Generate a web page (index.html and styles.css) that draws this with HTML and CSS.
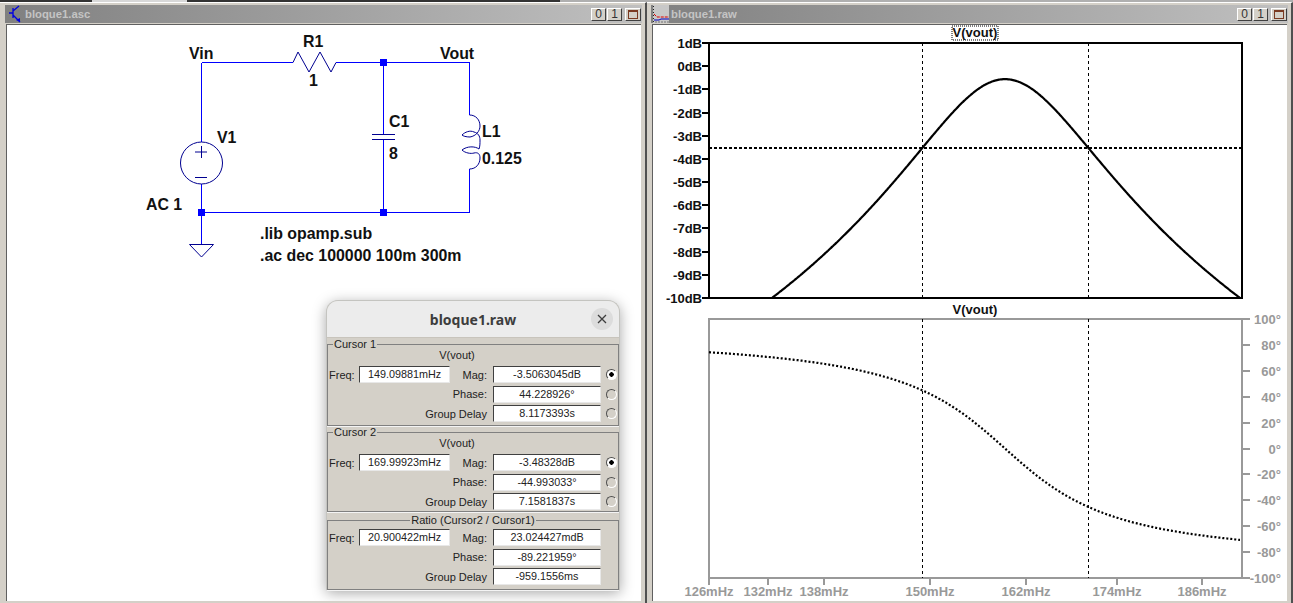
FILE: index.html
```html
<!DOCTYPE html>
<html lang="en">
<head>
  <meta charset="UTF-8" />
  <title>bloque1</title>
  <link rel="stylesheet" href="styles.css">
</head>
<body>
  <div class="topstrip"></div>
  <div class="desktop">
    <div class="window schematic">
      <div class="titlebar">
        <svg class="appicon" width="14" height="18" viewBox="0 0 14 18">
          <path d="M1 8H5M5 3V13M5 6L11 1M5 10L12 17" stroke="#0000e0" stroke-width="1.3" fill="none"/>
          <path d="M8 15L12 13L12 17Z" fill="#0000e0"/>
        </svg>
        <span class="wintitle">bloque1.asc</span>
        <div class="winbtns"><span class="winbtn">0</span><span class="winbtn">1</span><span class="winbtn maxbtn"><i class="maxbox"></i></span></div>
      </div>
      <div class="client">
        <svg class="canvas" width="634" height="576" viewBox="7 25 634 576">
          <g class="wire">
            <path d="M201.5 62.5H293M336 62.5H469.5V115M469.5 169V212.5H201.5M201.5 62.5V142M201.5 184V245"/>
            <path d="M383.5 62.5V134M383.5 140V212.5"/>
          </g>
          <g class="sym">
            <path d="M293 62.5L298 52L309 72L320 52L331 72L336 62.5"/>
            <circle cx="201.5" cy="163" r="21"/>
            <path d="M195 152H207M201.5 146V158M195 177.5H207"/>
            <path d="M189.5 244.5H213.5L201.5 257Z"/>
            <path d="M372 134.5H395M372 139.5H395" class="cap"/>
            <path d="M469.5 115C476 115 480 120 480 126C480 131 476 136 470 137C466 137 463 136 462 135C465 132 470 130 474 132C478 133 480 136 480 140C480 144 480 146 479 149C475 146 467 146 462 150C465 153 471 154 474 153C478 152 480 154 480 158C480 164 476 169 469.5 169"/>
          </g>
          <g class="junctions">
            <rect x="198" y="209" width="7" height="7"/>
            <rect x="380" y="59" width="7" height="7"/>
            <rect x="380" y="209" width="7" height="7"/>
          </g>
          <g class="labels">
            <text x="189" y="59">Vin</text>
            <text x="303" y="47">R1</text>
            <text x="309" y="86">1</text>
            <text x="440" y="59">Vout</text>
            <text x="217" y="143">V1</text>
            <text x="146" y="210">AC 1</text>
            <text x="389" y="127">C1</text>
            <text x="389" y="159">8</text>
            <text x="482" y="137">L1</text>
            <text x="482" y="164">0.125</text>
            <text x="260" y="239">.lib opamp.sub</text>
            <text x="260" y="261">.ac dec 100000 100m 300m</text>
          </g>
        </svg>

        <div class="dialog">
          <div class="dlghead">
            <span class="dlgtitle">bloque1.raw</span>
            <span class="dlgclose">
              <svg width="10" height="10" viewBox="0 0 10 10"><path d="M1 1L9 9M9 1L1 9" stroke="#3d3d3d" stroke-width="1.3"/></svg>
            </span>
          </div>
          <div class="dlgbody">
            <fieldset class="group">
              <legend>Cursor 1</legend>
              <div class="trace">V(vout)</div>
              <div class="row"><label class="flabel">Freq:</label><span class="field">149.09881mHz</span><label class="rlabel">Mag:</label><span class="field">-3.5063045dB</span><i class="radio on"></i></div>
              <div class="row"><label class="rlabel wide">Phase:</label><span class="field">44.228926°</span><i class="radio"></i></div>
              <div class="row"><label class="rlabel wide">Group Delay</label><span class="field">8.1173393s</span><i class="radio"></i></div>
            </fieldset>
            <fieldset class="group second">
              <legend>Cursor 2</legend>
              <div class="trace">V(vout)</div>
              <div class="row"><label class="flabel">Freq:</label><span class="field">169.99923mHz</span><label class="rlabel">Mag:</label><span class="field">-3.48328dB</span><i class="radio on"></i></div>
              <div class="row"><label class="rlabel wide">Phase:</label><span class="field">-44.993033°</span><i class="radio"></i></div>
              <div class="row"><label class="rlabel wide">Group Delay</label><span class="field">7.1581837s</span><i class="radio"></i></div>
            </fieldset>
            <fieldset class="group ratio">
              <legend>Ratio (Cursor2 / Cursor1)</legend>
              <div class="row"><label class="flabel">Freq:</label><span class="field">20.900422mHz</span><label class="rlabel">Mag:</label><span class="field">23.024427mdB</span></div>
              <div class="row"><label class="rlabel wide">Phase:</label><span class="field">-89.221959°</span></div>
              <div class="row"><label class="rlabel wide">Group Delay</label><span class="field">-959.1556ms</span></div>
            </fieldset>
          </div>
        </div>
      </div>
    </div>

    <div class="window plot">
      <div class="titlebar">
        <svg class="appicon" width="16" height="18" viewBox="0 0 16 18">
          <rect width="16" height="18" fill="#c8c8c8"/>
          <path d="M0.5 1V17H16" stroke="#222" fill="none" stroke-dasharray="1 2"/>
          <path d="M1 9L4 12H16" stroke="#e00000" fill="none" stroke-dasharray="3 1"/>
          <path d="M1 15H6L8 14H16" stroke="#0000c0" fill="none"/>
        </svg>
        <span class="wintitle">bloque1.raw</span>
        <div class="winbtns"><span class="winbtn">0</span><span class="winbtn">1</span><span class="winbtn maxbtn"><i class="maxbox"></i></span></div>
      </div>
      <div class="client">
        <svg id="plot" class="canvas" width="634" height="576" viewBox="653 25 634 576"></svg>
      </div>
    </div>
  </div>
  <script src="plot.js"></script>
</body>
</html>
```

FILE: styles.css
```css
html, body {
  margin: 0;
  height: 100%;
  overflow: hidden;
}

body {
  font-family: "Liberation Sans", Arial, sans-serif;
  background: #d4d0c8;
}

.topstrip {
  height: 2px;
  background: linear-gradient(to right, #333 92px, #d8d8d8 92px, #d8d8d8 187px, #333 187px, #333 560px, #b0b0b0 560px);
}

.desktop {
  display: flex;
  height: 601px;
}

.window {
  box-sizing: border-box;
  display: flex;
  flex-direction: column;
  background: #d4d0c8;
  border-top: 1px solid #fff;
  border-right: 2px solid #505050;
  padding: 2px 3px 2px 4px;
}

.schematic {
  width: 647px;
  padding-left: 5px;
}

.plot {
  width: 646px;
}

.titlebar {
  flex: none;
  display: flex;
  align-items: center;
  height: 18px;
  background: linear-gradient(to right, #808080, #c0c0c0);
  padding-left: 3px;
}

.plot .titlebar {
  padding-left: 2px;
}

.appicon {
  flex: none;
  margin-right: 3px;
}

.plot .appicon {
  margin-right: 2px;
}

.wintitle {
  flex: 1;
  font-size: 11.3px;
  font-weight: bold;
  color: #c4c4c4;
}

.winbtns {
  display: flex;
  gap: 1px;
  margin-right: 1px;
}

.winbtn {
  box-sizing: border-box;
  width: 15px;
  height: 13px;
  display: flex;
  align-items: center;
  justify-content: center;
  font-size: 12px;
  color: #333;
  background: #d4d0c8;
  border: 1px solid;
  border-color: #fff #404040 #404040 #fff;
}

.maxbtn {
  width: 16px;
  margin-left: 2px;
}

.maxbox {
  box-sizing: border-box;
  width: 10px;
  height: 9px;
  border: 1px solid #7a3a22;
  border-top-width: 2px;
}

.client {
  flex: 1;
  position: relative;
  margin: 1px 1px 0;
  background: #fff;
  border-top: 1px solid #606060;
  border-left: 1px solid #606060;
  overflow: hidden;
}

.canvas {
  display: block;
}

.wire path {
  fill: none;
  stroke: #0000ff;
  stroke-width: 1;
  shape-rendering: crispEdges;
}

.sym path, .sym circle {
  fill: none;
  stroke: #000090;
  stroke-width: 1;
}

.sym .cap {
  shape-rendering: crispEdges;
}

.junctions rect {
  fill: #0000ff;
}

.labels text {
  font-size: 15.9px;
  font-weight: bold;
  fill: #111;
}

/* cursor readout, gtk headerbar over a win32 body */
.dialog {
  position: absolute;
  left: 319px;
  top: 275px;
  box-sizing: border-box;
  width: 294px;
  border-radius: 12px 12px 0 0;
  background: #d4d0c8;
  box-shadow: 0 3px 14px rgba(0,0,0,0.35);
  border: 1px solid #c4c4c0;
  border-bottom: 0;
}

.dlghead {
  position: relative;
  height: 36px;
  display: flex;
  align-items: center;
  justify-content: center;
  background: #ececec;
  border-radius: 11px 11px 0 0;
  border-bottom: 1px solid #c8c4bc;
}

.dlgtitle {
  font-family: "Noto Sans", sans-serif;
  font-size: 14px;
  font-weight: bold;
  color: #3d3d3d;
}

.dlgclose {
  position: absolute;
  right: 6px;
  top: 7px;
  width: 22px;
  height: 22px;
  border-radius: 50%;
  background: #dcdcdc;
  display: flex;
  align-items: center;
  justify-content: center;
}

.dlgbody {
  padding-top: 0;
}

.group {
  box-sizing: border-box;
  margin: 0;
  padding: 0;
  min-width: 0;
  height: 88px;
  border: 1px solid #808080;
  box-shadow: 0 1px 0 #f4f4f4;
  font-size: 11px;
  color: #222;
}

.group legend {
  padding: 0 1px;
  margin-left: 5px;
  line-height: 12px;
}

.second {
  height: 86px;
}

.ratio {
  height: 76px;
  margin-top: 2px;
  padding-top: 2px;
}

.ratio legend {
  margin: 0 auto;
}

.trace {
  height: 15px;
  line-height: 11px;
  text-align: center;
  padding-right: 32px;
}

.row {
  display: grid;
  grid-template-columns: 31px 91px 43px 108px 17px;
  align-items: center;
  height: 19.5px;
}

.flabel {
  padding-left: 1px;
}

.rlabel {
  text-align: right;
  padding-right: 6px;
}

.rlabel.wide {
  grid-column: 1 / 4;
}

.field {
  box-sizing: border-box;
  height: 17px;
  line-height: 15px;
  text-align: center;
  font-size: 10.8px;
  background: #fff;
  border: 1px solid;
  border-color: #404040 #e8e8e8 #e8e8e8 #404040;
}

.radio {
  box-sizing: border-box;
  width: 11px;
  height: 11px;
  margin-left: 5px;
  border-radius: 50%;
  background: #d4d0c8;
  border: 1px solid;
  border-color: #505050 #fff #fff #505050;
}

.radio.on {
  background: radial-gradient(circle, #000 0 2px, #fff 2.5px);
}

/* plot svg */
.pane-a { fill: none; stroke: #000; stroke-width: 2; shape-rendering: crispEdges; }
.pane-b { fill: none; stroke: #999; stroke-width: 2; shape-rendering: crispEdges; }
.tick-a { stroke: #000; stroke-width: 2; shape-rendering: crispEdges; }
.tick-b { stroke: #999; stroke-width: 2; shape-rendering: crispEdges; }
.cursor { stroke: #000; stroke-width: 1; stroke-dasharray: 3 3; shape-rendering: crispEdges; }
.cursor-h { stroke: #000; stroke-width: 1.5; stroke-dasharray: 3 2; shape-rendering: crispEdges; }
.mag { fill: none; stroke: #000; stroke-width: 2.2; }
.phase { fill: none; stroke: #000; stroke-width: 2.2; stroke-dasharray: 2 2; }
.lbl-a { font-size: 13px; font-weight: bold; fill: #111; }
.lbl-b { font-size: 13px; font-weight: bold; fill: #999; }
.trace-name { font-size: 13px; font-weight: bold; fill: #111; }
.trace-box { fill: #fff; stroke: #000; stroke-width: 1; stroke-dasharray: 1 1; }
```

FILE: plot.js
```js
// draws both panes of the waveform viewer
const svg = document.getElementById('plot');
const NS = 'http://www.w3.org/2000/svg';

function add(tag, attrs, text) {
  const el = document.createElementNS(NS, tag);
  for (const k in attrs) el.setAttribute(k, attrs[k]);
  if (text) el.textContent = text;
  svg.appendChild(el);
}

const left = 709, right = 1242;
const topA = 43, botA = 298, topB = 319, botB = 578;
const cursorX = [922, 1088];
const freqTicks = { 126: 709, 132: 768, 138: 824, 150: 930, 162: 1026, 174: 1117, 186: 1202 };

// resonance centre and half width in screen pixels
const x0 = 1005, wPh = 83;

const yMag = db => topA + (1 - db) * (botA - topA) / 11;
const yPh = p => topB + (100 - p) * (botB - topB) / 200;

const magPts = [], phPts = [];
for (let x = left; x <= right - 2; x += 1) {
  const wMag = x < x0 ? 83.5 : 84.2;
  const db = -0.56 - 10 * Math.log10(1 + Math.pow((x - x0) / wMag, 2));
  if (db >= -10) magPts.push(x + ',' + yMag(db).toFixed(1));
  const ph = -Math.atan((x - x0) / wPh) * 180 / Math.PI;
  phPts.push(x + ',' + yPh(ph).toFixed(1));
}

add('rect', { class: 'pane-a', x: left, y: topA, width: right - left, height: botA - topA });
add('path', { class: 'pane-b', d: `M${left} ${topB}H${right}V${botB}H${left}Z` });

// magnitude axis
for (let i = 0; i <= 11; i++) {
  const y = Math.round(topA + i * (botA - topA) / 11);
  add('line', { class: 'tick-a', x1: left - 7, x2: left, y1: y, y2: y });
  add('text', { class: 'lbl-a', x: left - 7, y: y + 5, 'text-anchor': 'end' }, (1 - i) + 'dB');
}

// phase axis
for (let i = 0; i <= 10; i++) {
  const y = Math.round(topB + i * (botB - topB) / 10);
  add('line', { class: 'tick-b', x1: right, x2: right + 8, y1: y, y2: y });
  add('text', { class: 'lbl-b', x: 1281, y: y + 5, 'text-anchor': 'end' }, (100 - i * 20) + '°');
}

// frequency axis
for (const f in freqTicks) {
  const x = freqTicks[f];
  add('line', { class: 'tick-b', x1: x, x2: x, y1: botB, y2: botB + 7 });
  add('text', { class: 'lbl-b', x: x, y: 596, 'text-anchor': 'middle' }, f + 'mHz');
}

// cursors
cursorX.forEach(x => {
  add('line', { class: 'cursor', x1: x + 0.5, x2: x + 0.5, y1: topA, y2: botA });
  add('line', { class: 'cursor', x1: x + 0.5, x2: x + 0.5, y1: topB, y2: botB });
});
add('line', { class: 'cursor-h', x1: left, x2: right, y1: 148, y2: 148 });

add('polyline', { class: 'mag', points: magPts.join(' ') });
add('polyline', { class: 'phase', points: phPts.join(' ') });

add('rect', { class: 'trace-box', x: 952, y: 26, width: 46, height: 14 });
add('text', { class: 'trace-name', x: 975, y: 37, 'text-anchor': 'middle' }, 'V(vout)');
add('text', { class: 'trace-name', x: 975, y: 314, 'text-anchor': 'middle' }, 'V(vout)');
```
